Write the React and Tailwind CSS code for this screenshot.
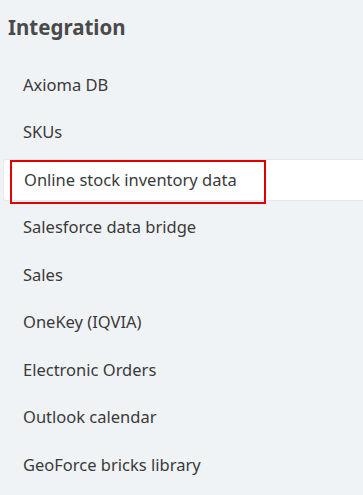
import React from "react";

const items = [
  "Axioma DB",
  "SKUs",
  "Online stock inventory data",
  "Salesforce data bridge",
  "Sales",
  "OneKey (IQVIA)",
  "Electronic Orders",
  "Outlook calendar",
  "GeoForce bricks library",
];

export default function App() {
  return (
    <div
      className="w-[363px] h-[495px] bg-[#f0f3f6] overflow-hidden"
      style={{ fontFamily: '"Noto Sans", "Open Sans", sans-serif' }}
    >
      <h1 className="pl-[8px] pt-[13px] text-[20.5px] leading-[28px] font-bold text-[#4a4a4a]">
        Integration
      </h1>
      <ul className="mt-[23px] pl-[3px]">
        {items.map((t, i) => {
          const sel = i === 2;
          return (
            <li
              key={t}
              className={
                "relative h-[42px] mb-[5.5px] flex items-center pl-[20px] text-[16.5px] text-[#3a3a3a] " +
                (sel ? "bg-white rounded-l-[3px] border-y border-l border-[#e6e9ee]" : "")
              }
            >
              {t}
              {sel && (
                <span className="absolute left-[6px] top-0 w-[256px] h-[44px] border-2 border-[#e00000]" />
              )}
            </li>
          );
        })}
      </ul>
    </div>
  );
}
